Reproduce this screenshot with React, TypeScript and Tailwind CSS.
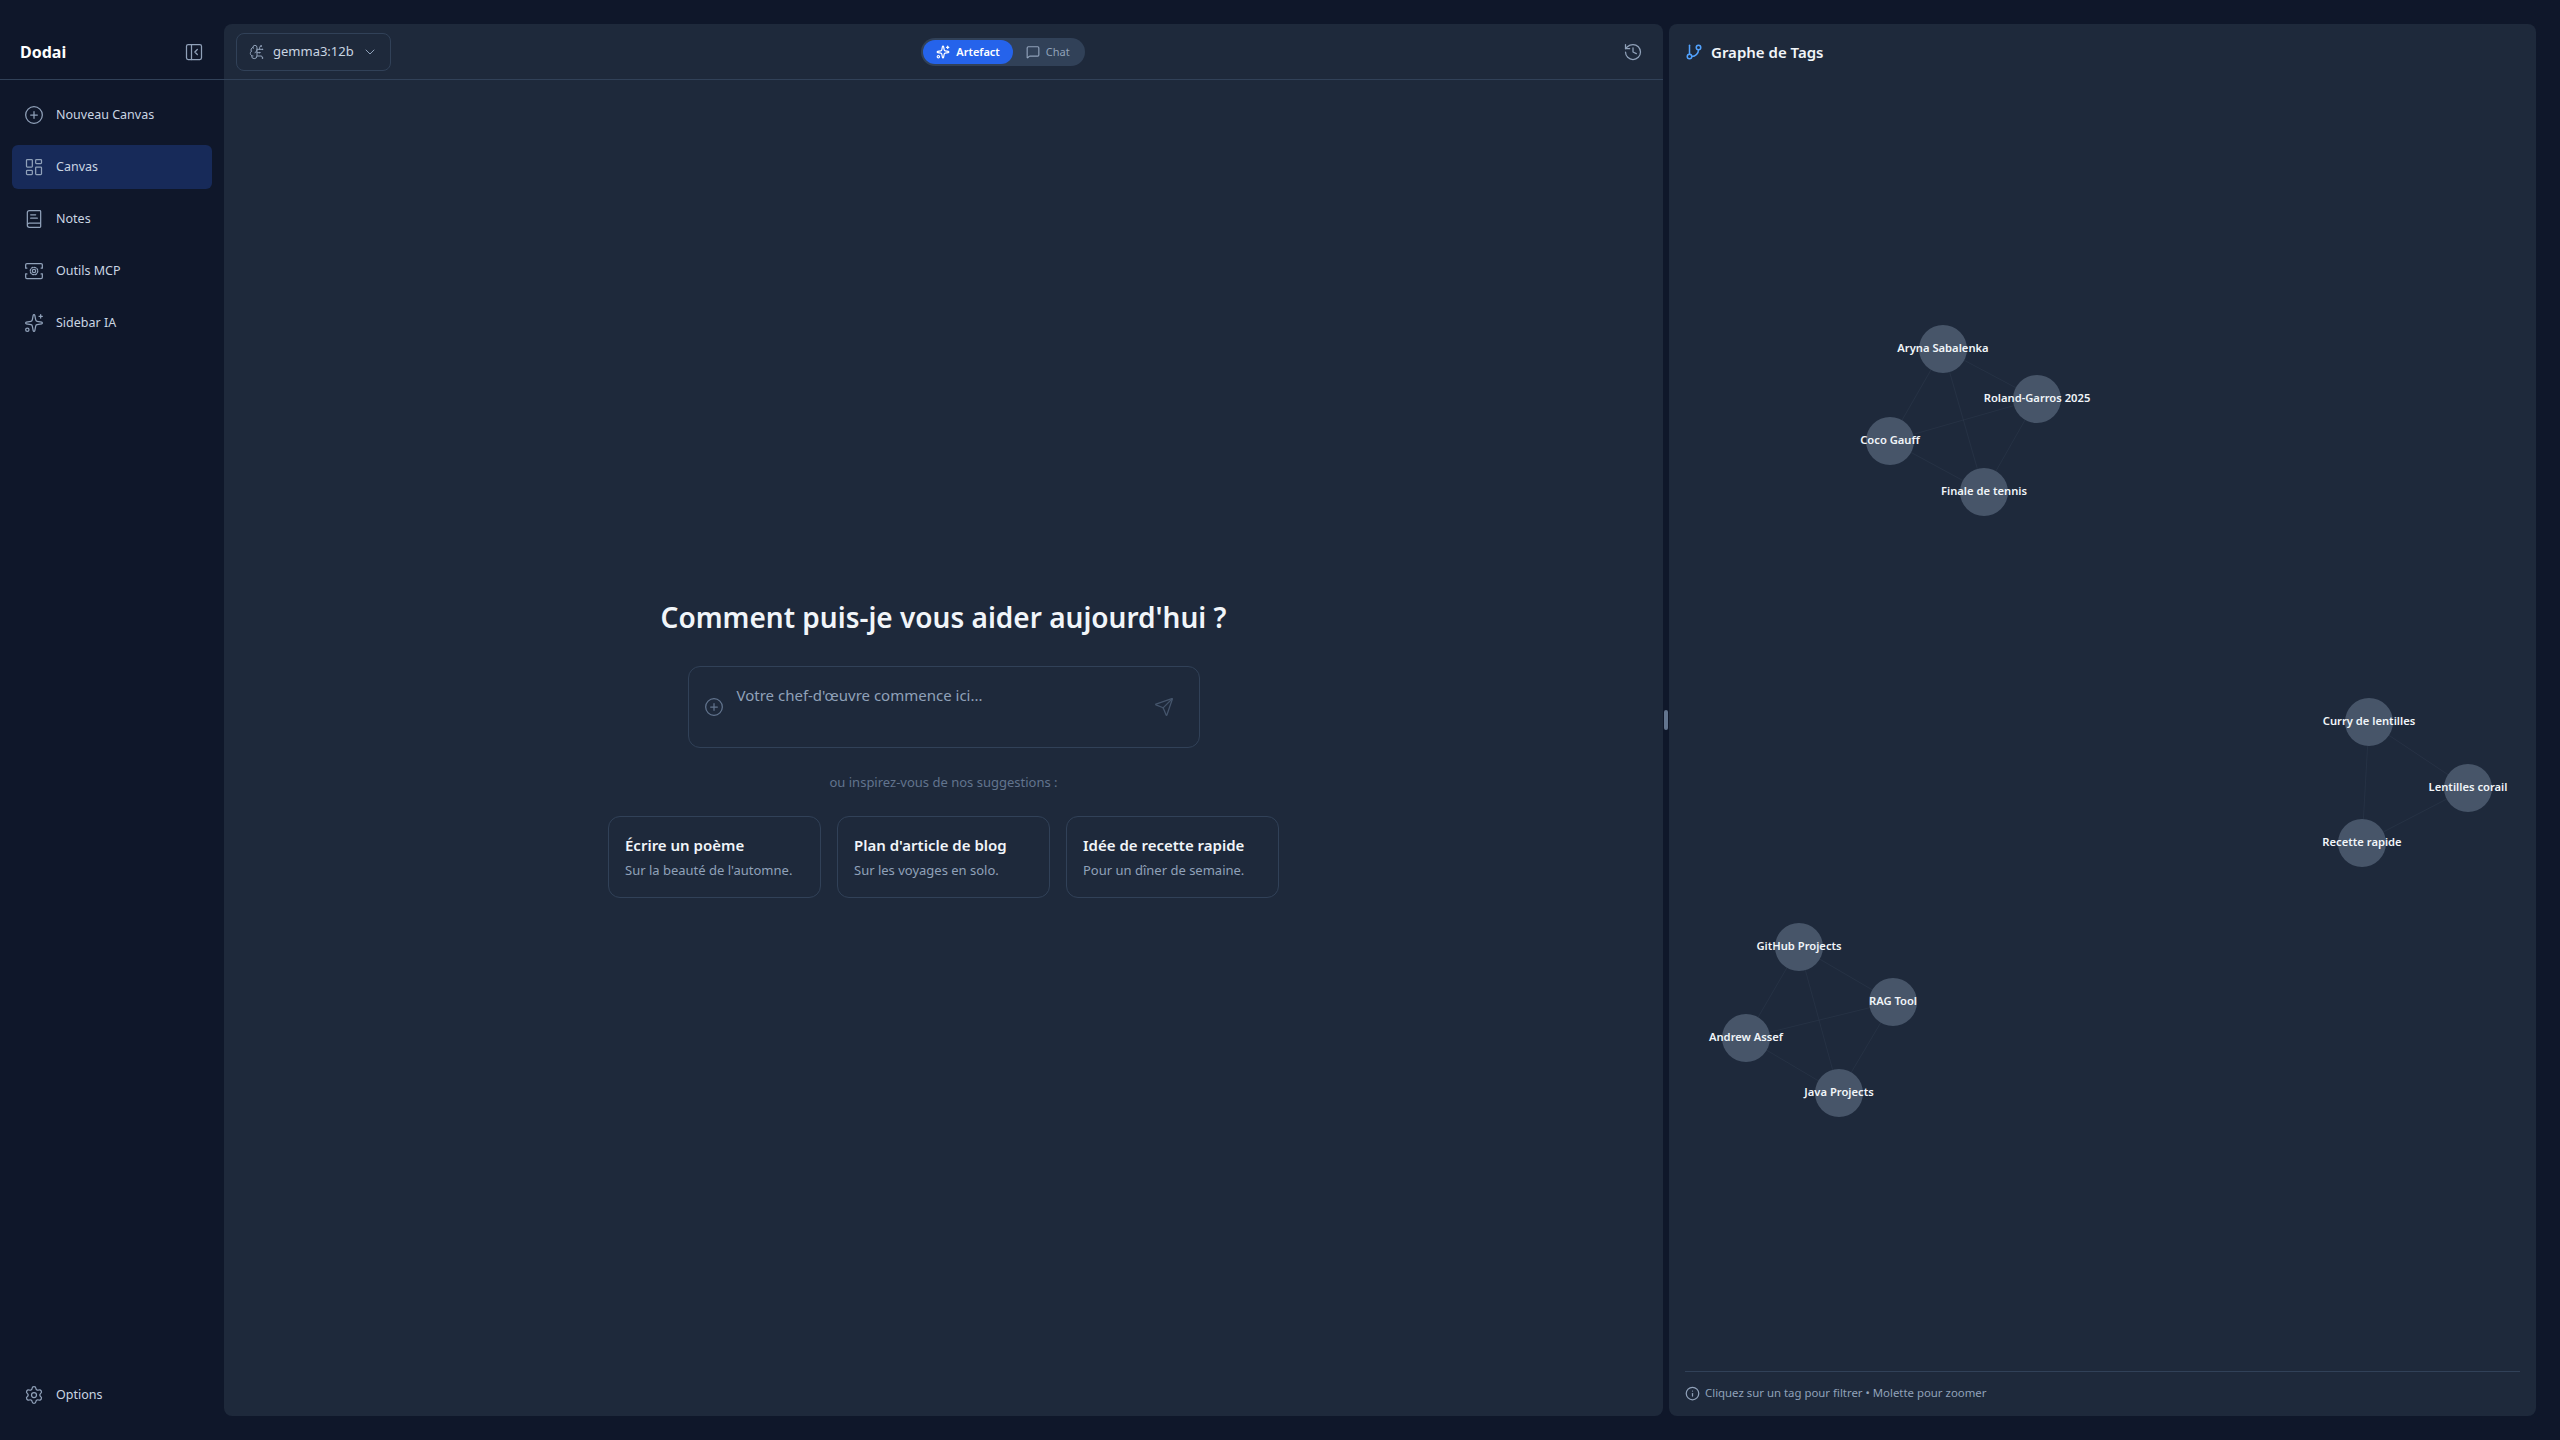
import {
  BookText,
  BrainCircuit,
  ChevronDown,
  CirclePlus,
  GitBranch,
  History,
  Info,
  LayoutDashboard,
  MessageSquare,
  PanelLeftClose,
  Send,
  Settings,
  Sparkles,
} from "lucide-react";

function McpIcon({ size = 20, className = "" }: { size?: number; strokeWidth?: number; className?: string }) {
  return (
    <svg width={size} height={size} viewBox="0 0 24 24" fill="none" stroke="currentColor" strokeWidth="1.5" strokeLinecap="round" strokeLinejoin="round" className={className}>
      <path d="M2 8V4.5A1.5 1.5 0 0 1 3.5 3h17A1.5 1.5 0 0 1 22 4.5V8" />
      <path d="M2 16v3.5A1.5 1.5 0 0 0 3.5 21h17a1.5 1.5 0 0 0 1.5-1.5V16" />
      <path d="M2 8.5h1.5M20.5 8.5H22M2 15.5h1.5M20.5 15.5H22" />
      <circle cx="12" cy="12" r="2" />
      <circle cx="12" cy="12" r="4.5" strokeDasharray="2 1.5" />
    </svg>
  );
}

const NAV = [
  { label: "Nouveau Canvas", icon: CirclePlus },
  { label: "Canvas", icon: LayoutDashboard, active: true },
  { label: "Notes", icon: BookText },
  { label: "Outils MCP", icon: McpIcon },
  { label: "Sidebar IA", icon: Sparkles },
];

const SUGGESTIONS = [
  { title: "Écrire un poème", text: "Sur la beauté de l'automne." },
  { title: "Plan d'article de blog", text: "Sur les voyages en solo." },
  { title: "Idée de recette rapide", text: "Pour un dîner de semaine." },
];

// graph coords are relative to the right panel's top-left corner
const CLUSTERS = [
  [
    { label: "Aryna Sabalenka", x: 274, y: 325 },
    { label: "Roland-Garros 2025", x: 368, y: 375 },
    { label: "Coco Gauff", x: 221, y: 417 },
    { label: "Finale de tennis", x: 315, y: 468 },
  ],
  [
    { label: "Curry de lentilles", x: 700, y: 698 },
    { label: "Lentilles corail", x: 799, y: 764 },
    { label: "Recette rapide", x: 693, y: 819 },
  ],
  [
    { label: "GitHub Projects", x: 130, y: 923 },
    { label: "RAG Tool", x: 224, y: 978 },
    { label: "Andrew Assef", x: 77, y: 1014 },
    { label: "Java Projects", x: 170, y: 1069 },
  ],
];

function TagGraph() {
  return (
    <svg width="867" height="1340" className="absolute left-0 top-0">
      {CLUSTERS.map((nodes) =>
        nodes.flatMap((a, i) =>
          nodes.slice(i + 1).map((b) => (
            <line key={a.label + b.label} x1={a.x} y1={a.y} x2={b.x} y2={b.y} stroke="#475569" strokeOpacity="0.2" />
          )),
        ),
      )}
      {CLUSTERS.flat().map((n) => (
        <circle key={n.label} cx={n.x} cy={n.y} r="24" fill="#475569" />
      ))}
      {CLUSTERS.flat().map((n) => (
        <text key={n.label} x={n.x} y={n.y + 3} textAnchor="middle" fill="#f1f5f9" fontSize="11.2" fontWeight="600">
          {n.label}
        </text>
      ))}
    </svg>
  );
}

export default function App() {
  return (
    <div className="flex h-[1440px] w-[2560px] overflow-hidden bg-[#0f172a] font-['Noto_Sans',sans-serif] text-slate-100">
      <aside className="flex w-[224px] shrink-0 flex-col">
        <div className="flex h-[80px] items-center justify-between border-b border-slate-700 pl-5 pr-[20px] pt-[24px]">
          <span className="text-[16px] font-bold text-white">Dodai</span>
          <PanelLeftClose size={20} strokeWidth={1.5} className="text-slate-400" />
        </div>
        <nav className="flex flex-col gap-2 px-3 pt-[13px]">
          {NAV.map((item) => (
            <div
              key={item.label}
              className={`flex h-[44px] items-center gap-[12px] rounded-md px-[12px] text-[12.5px] text-slate-300 ${
                item.active ? "bg-[#172a59]" : ""
              }`}
            >
              <item.icon size={20} strokeWidth={1.5} className="text-slate-400" />
              {item.label}
            </div>
          ))}
        </nav>
        <div className="mb-[23px] mt-auto flex h-[44px] items-center gap-[12px] px-[24px] text-[12.5px] text-slate-300">
          <Settings size={20} strokeWidth={1.5} className="text-slate-400" />
          Options
        </div>
      </aside>

      <div className="flex min-w-0 flex-1 gap-[6px] py-[24px] pr-[24px]">
        <main className="flex w-[1439px] shrink-0 flex-col rounded-lg bg-[#1e293b]">
          <header className="flex h-[56px] items-center justify-between border-b border-slate-700 pl-3 pr-[20px] pt-px">
            <div className="flex h-[38px] w-[155px] items-center gap-2 rounded-lg border border-slate-700 px-[12px] text-[13px] text-slate-300">
              <BrainCircuit size={16} strokeWidth={1.5} className="text-slate-400" />
              gemma3:12b
              <ChevronDown size={16} strokeWidth={1.5} className="text-slate-400" />
            </div>
            <div className="mr-[8px] flex h-[28px] items-center rounded-full bg-slate-700 p-[2px] text-[11px]">
              <div className="flex h-[24px] items-center gap-[6px] rounded-full bg-[#2563eb] px-[13px] font-semibold text-white">
                <Sparkles size={14} />
                Artefact
              </div>
              <div className="flex h-[24px] items-center gap-[6px] px-[13px] text-slate-400">
                <MessageSquare size={14} />
                Chat
              </div>
            </div>
            <History size={20} strokeWidth={1.5} className="text-slate-400" />
          </header>

          <div className="flex flex-1 flex-col items-center pt-[517px]">
            <h1 className="text-[28px] font-semibold leading-[40px] text-slate-100">
              Comment puis-je vous aider aujourd'hui ?
            </h1>
            <div className="mt-[29px] flex h-[82px] w-[512px] items-center rounded-xl border border-slate-700 pl-[15px] pr-[25px]">
              <CirclePlus size={20} strokeWidth={1.5} className="text-slate-500" />
              <span className="mb-[24px] ml-[13px] flex-1 text-[15px] text-slate-400">Votre chef-d'œuvre commence ici...</span>
              <Send size={20} strokeWidth={1.5} className="text-slate-600" />
            </div>
            <p className="mt-[25px] text-[13px] text-slate-500">ou inspirez-vous de nos suggestions :</p>
            <div className="mt-[23px] grid grid-cols-3 gap-[16px]">
              {SUGGESTIONS.map((s) => (
                <div key={s.title} className="h-[82px] w-[213px] rounded-xl border border-slate-700 px-[16px] pt-[18px]">
                  <div className="text-[15px] font-semibold leading-[20px] text-slate-100">{s.title}</div>
                  <div className="mt-[6px] text-[13px] leading-[18px] text-slate-400">{s.text}</div>
                </div>
              ))}
            </div>
          </div>
        </main>

        <section className="flex flex-1 flex-col rounded-lg bg-[#1e293b]">
          <div className="flex h-[56px] items-center gap-2 px-[16px]">
            <GitBranch size={18} className="text-blue-400" />
            <span className="text-[15px] font-semibold text-slate-100">Graphe de Tags</span>
          </div>
          <div className="relative flex-1 overflow-hidden">
            <div className="absolute left-0 top-[-56px]">
              <TagGraph />
            </div>
          </div>
          <div className="mx-[16px] flex h-[45px] items-center gap-[5px] border-t border-slate-700 pb-[2px] text-[11.4px] text-slate-400">
            <Info size={15} />
            Cliquez sur un tag pour filtrer • Molette pour zoomer
          </div>
        </section>
      </div>

      <div className="absolute left-[1664px] top-[710px] h-[20px] w-[4px] rounded-sm bg-slate-500" />
    </div>
  );
}
